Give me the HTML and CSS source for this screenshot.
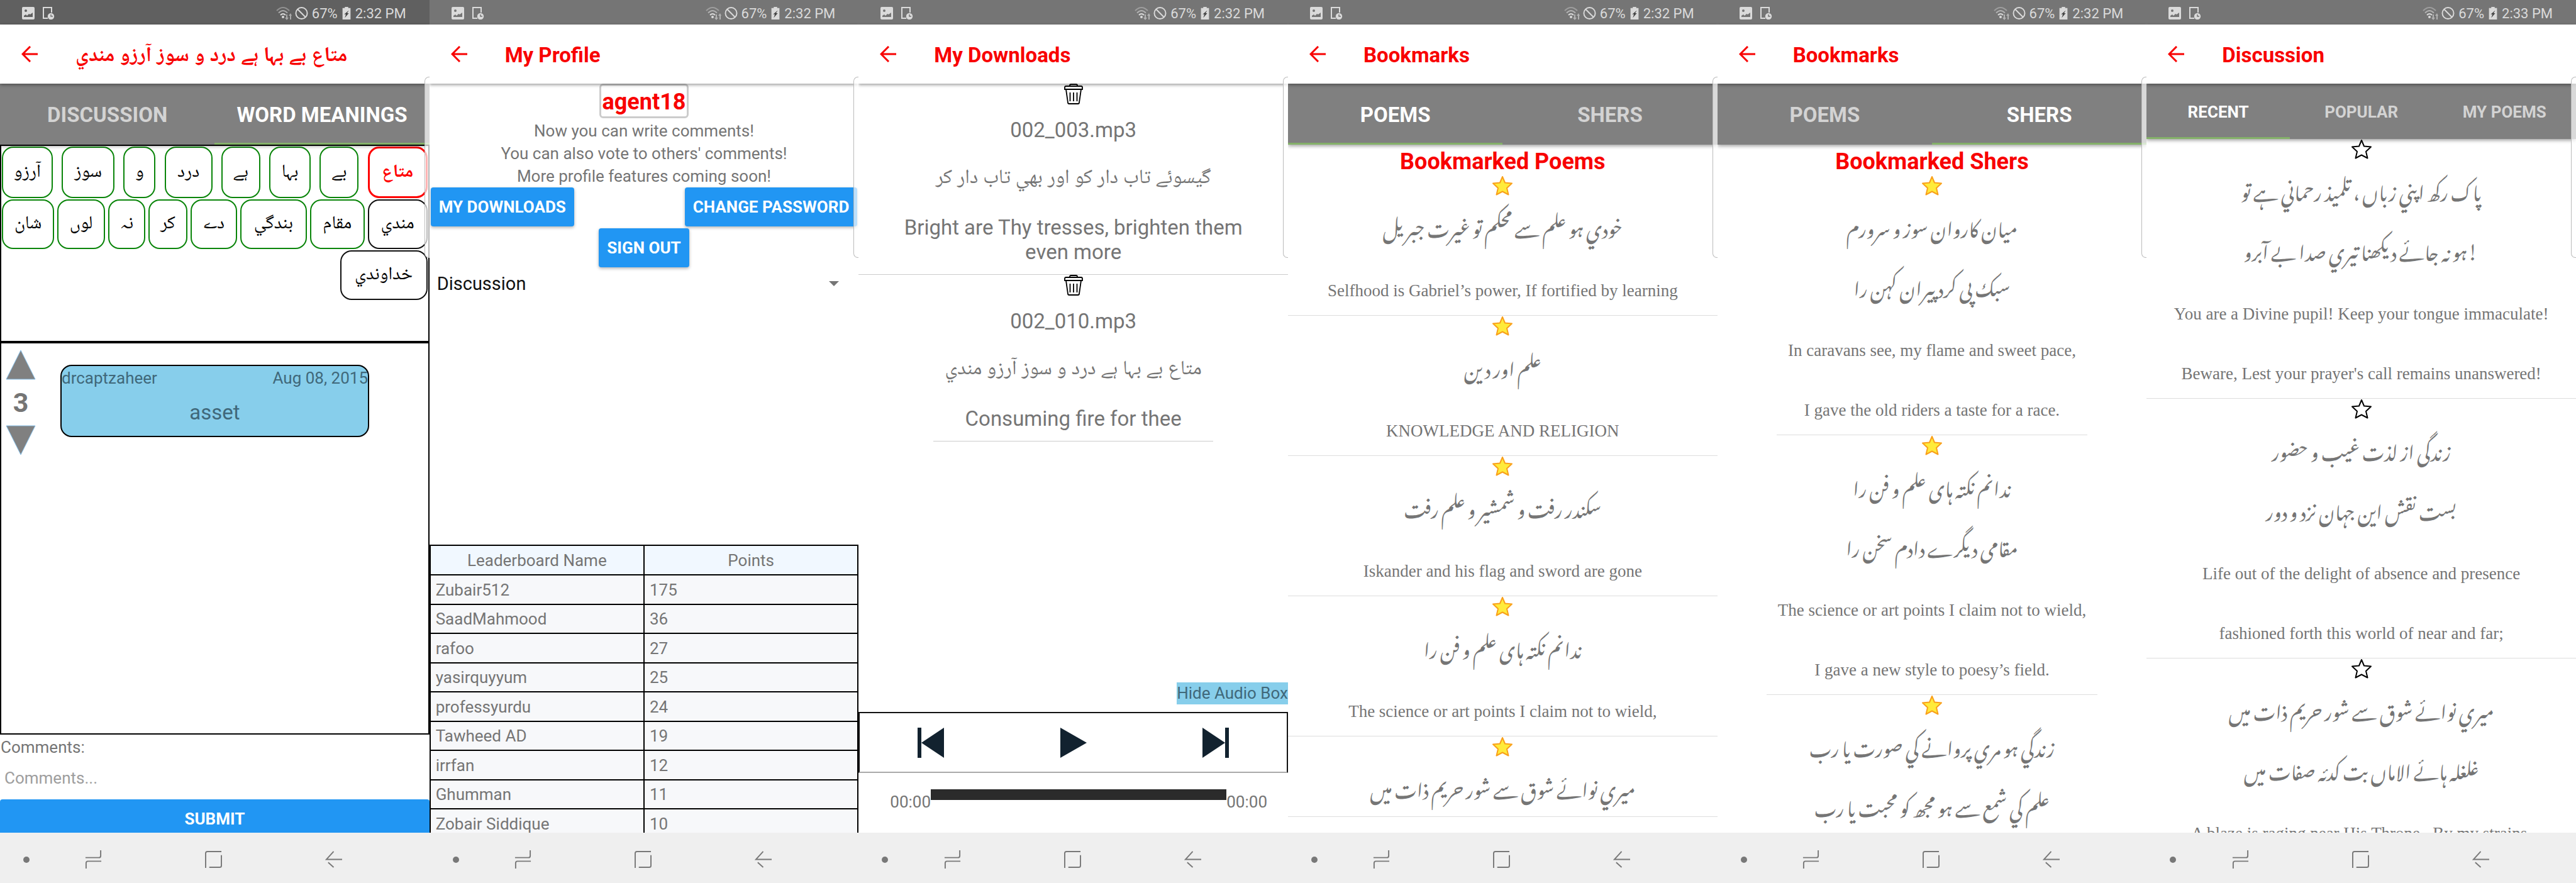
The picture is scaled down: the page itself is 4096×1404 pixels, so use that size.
FILE: index.html
```html
<!DOCTYPE html>
<html lang="en">
<head>
<meta charset="utf-8">
<title>Poetry app screens</title>
<link rel="stylesheet" href="styles.css">
</head>
<body>
<svg class="sprite" aria-hidden="true">
  <symbol id="i-image" viewBox="0 0 20 20"><path fill="currentColor" fill-rule="evenodd" d="M2 0h16a2 2 0 0 1 2 2v16a2 2 0 0 1-2 2H2a2 2 0 0 1-2-2V2a2 2 0 0 1 2-2zM3 16h14V9l-4 3-2-1-3 3-2-2-3 2zM6 4a2 2 0 1 0 0 4 2 2 0 0 0 0-4z"/></symbol>
  <symbol id="i-phone" viewBox="0 0 20 20"><path fill="none" stroke="currentColor" stroke-width="2" d="M9 18H2V1h13v8"/><circle cx="14" cy="15" r="5.200" fill="currentColor"/><path d="M14 12v3h3" fill="none" stroke="#757575" stroke-width="1.500"/></symbol>
  <symbol id="i-wifi" viewBox="0 0 26 22"><g fill="none" stroke="currentColor" stroke-width="2"><path opacity=".4" d="M1 7Q11-3 21 7"/><path opacity=".6" d="M4 10.500Q11 3.500 18 10.500"/><path d="M7 14Q11 10 15 14"/></g><circle cx="11" cy="17" r="2" fill="currentColor"/><path fill="currentColor" opacity=".6" d="M16 13h2v5h2l-3 4-3-4h2zM22 21h2v-6h1l-2-4-3 4h2z"/></symbol>
  <symbol id="i-none" viewBox="0 0 22 22"><g fill="none" stroke="currentColor" stroke-width="2"><circle cx="11" cy="11" r="9.500"/><path d="M4.500 4.500l13 13"/></g></symbol>
  <symbol id="i-battery" viewBox="0 0 14 22"><path fill="currentColor" d="M4 0h6v2h4v20H0V2h4z"/><path fill="#444" d="M11 6L3 13h3l-2 6 7-8H8z"/></symbol>
  <symbol id="i-back" viewBox="0 0 26 26"><path fill="none" stroke="currentColor" stroke-width="3" d="M26 13H2M14 1L2 13l12 12"/></symbol>
  <symbol id="i-recents" viewBox="0 0 26 30"><path fill="none" stroke="currentColor" stroke-width="2" d="M0 12h22q3 0 3-3V0M26 18H4q-3 0-3 3v9"/></symbol>
  <symbol id="i-home" viewBox="0 0 28 28"><path fill="none" stroke="currentColor" stroke-width="2" d="M1 28V4q0-3 3-3h23M27 7v17q0 3-3 3H7"/></symbol>
  <symbol id="i-navback" viewBox="0 0 28 28"><path fill="none" stroke="currentColor" stroke-width="2" d="M28 14H2L14 1M5 19l9 8"/></symbol>
  <symbol id="i-dot" viewBox="0 0 10 10"><circle cx="5" cy="5" r="5" fill="currentColor"/></symbol>
  <symbol id="i-star" viewBox="0 0 34 32"><path stroke-width="2" stroke-linejoin="round" d="M17 2l4 9.500 11 1-8 7.500 2.500 10.500L17 25.500 7.500 30.500 10 20l-8-7.500 11-1z"/></symbol>
  <symbol id="i-trash" viewBox="0 0 30 33"><g fill="none" stroke="#000" stroke-width="1.800"><path d="M9 4V3q0-2 2-2h8q2 0 2 2v1M3 4h24q2 0 2 2v3H1V6q0-2 2-2zM3 9l3 21q0 2 2 2h14q2 0 2-2l3-21M9.500 14v14M15 14v14M20.500 14v14"/></g></symbol>
</svg>

<main class="screens">

<section class="screen screen-dark">
  <div class="status"><svg class="s-img"><use href="#i-image"/></svg><svg class="s-img"><use href="#i-phone"/></svg><span class="status-gap"></span><svg class="s-wifi"><use href="#i-wifi"/></svg><svg class="s-none"><use href="#i-none"/></svg><span>67%</span><svg class="s-bat"><use href="#i-battery"/></svg><span>2:32 PM</span></div>
  <header class="appbar"><button class="back" aria-label="Back"><svg><use href="#i-back"/></svg></button><h1 class="urdu-title" lang="ur">متاع بے بہا ہے درد و سوز آرزو مندي</h1></header>
  <nav class="tabs"><button class="tab">DISCUSSION</button><button class="tab active">WORD MEANINGS</button></nav>
  <div class="body">
    <div class="words" dir="rtl" lang="ur">
      <div class="word-row row-a"><button class="word chosen">متاع</button><button class="word">بے</button><button class="word">بہا</button><button class="word">ہے</button><button class="word">درد</button><button class="word">و</button><button class="word">سوز</button><button class="word">آرزو</button></div>
      <div class="word-row row-b"><button class="word plain">مندي</button><button class="word">مقام</button><button class="word">بندگي</button><button class="word">دے</button><button class="word">کر</button><button class="word">نہ</button><button class="word">لوں</button><button class="word">شان</button></div>
      <div class="word-row row-c"><button class="word plain">خداوندي</button></div>
    </div>
    <div class="meanings">
      <div class="votes"><button class="vote" aria-label="Vote up"><svg viewBox="0 0 48 48"><path d="M24 1L47 47H1z"/></svg></button><strong>3</strong><button class="vote" aria-label="Vote down"><svg viewBox="0 0 48 48"><path d="M24 47L47 1H1z"/></svg></button></div>
      <article class="meaning"><div class="meta"><span>drcaptzaheer</span><span>Aug 08, 2015</span></div><p>asset</p></article>
    </div>
    <form class="comment"><label for="comment">Comments:</label><input id="comment" type="text" placeholder="Comments..."><button class="btn submit" type="button">SUBMIT</button></form>
  </div>
  <nav class="navbar"><svg class="n-dot"><use href="#i-dot"/></svg><button aria-label="Recents"><svg><use href="#i-recents"/></svg></button><button aria-label="Home"><svg><use href="#i-home"/></svg></button><button aria-label="Back"><svg><use href="#i-navback"/></svg></button></nav>
</section>

<section class="screen">
  <div class="status"><svg class="s-img"><use href="#i-image"/></svg><svg class="s-img"><use href="#i-phone"/></svg><span class="status-gap"></span><svg class="s-wifi"><use href="#i-wifi"/></svg><svg class="s-none"><use href="#i-none"/></svg><span>67%</span><svg class="s-bat"><use href="#i-battery"/></svg><span>2:32 PM</span></div>
  <header class="appbar"><button class="back" aria-label="Back"><svg><use href="#i-back"/></svg></button><h1>My Profile</h1></header>
  <div class="body profile">
    <h2 class="user">agent18</h2>
    <div class="intro"><p>Now you can write comments!</p><p>You can also vote to others' comments!</p><p>More profile features coming soon!</p></div>
    <div class="actions"><button class="btn">MY DOWNLOADS</button><button class="btn">CHANGE PASSWORD</button></div>
    <button class="btn signout">SIGN OUT</button>
    <div class="picker"><select aria-label="Leaderboard type"><option>Discussion</option></select><svg viewBox="0 0 16 8"><path d="M0 0h16L8 8z"/></svg></div>
    <div class="board">
      <table>
        <thead><tr><th scope="col">Leaderboard Name</th><th scope="col">Points</th></tr></thead>
        <tbody>
          <tr><td>Zubair512</td><td>175</td></tr>
          <tr><td>SaadMahmood</td><td>36</td></tr>
          <tr><td>rafoo</td><td>27</td></tr>
          <tr><td>yasirquyyum</td><td>25</td></tr>
          <tr><td>professyurdu</td><td>24</td></tr>
          <tr><td>Tawheed AD</td><td>19</td></tr>
          <tr><td>irrfan</td><td>12</td></tr>
          <tr><td>Ghumman</td><td>11</td></tr>
          <tr><td>Zobair Siddique</td><td>10</td></tr>
        </tbody>
      </table>
    </div>
  </div>
  <nav class="navbar"><svg class="n-dot"><use href="#i-dot"/></svg><button aria-label="Recents"><svg><use href="#i-recents"/></svg></button><button aria-label="Home"><svg><use href="#i-home"/></svg></button><button aria-label="Back"><svg><use href="#i-navback"/></svg></button></nav>
</section>

<section class="screen">
  <div class="status"><svg class="s-img"><use href="#i-image"/></svg><svg class="s-img"><use href="#i-phone"/></svg><span class="status-gap"></span><svg class="s-wifi"><use href="#i-wifi"/></svg><svg class="s-none"><use href="#i-none"/></svg><span>67%</span><svg class="s-bat"><use href="#i-battery"/></svg><span>2:32 PM</span></div>
  <header class="appbar"><button class="back" aria-label="Back"><svg><use href="#i-back"/></svg></button><h1>My Downloads</h1></header>
  <div class="body">
    <article class="download wide"><button class="trash" aria-label="Delete"><svg><use href="#i-trash"/></svg></button><p>002_003.mp3</p><p class="ur" lang="ur">گیسوئے تاب دار کو اور بھي تاب دار کر</p><p>Bright are Thy tresses, brighten them even more</p></article>
    <article class="download"><button class="trash" aria-label="Delete"><svg><use href="#i-trash"/></svg></button><p>002_010.mp3</p><p class="ur" lang="ur">متاع بے بہا ہے درد و سوز آرزو مندي</p><p>Consuming fire for thee</p></article>
    <div class="audio">
      <button class="hide">Hide Audio Box</button>
      <div class="player">
        <button aria-label="Previous"><svg viewBox="0 0 42 48"><path d="M0 0h6v48H0zM42 0v48L6 24z"/></svg></button>
        <button aria-label="Play"><svg viewBox="0 0 42 48"><path d="M0 0l42 24L0 48z"/></svg></button>
        <button aria-label="Next"><svg viewBox="0 0 42 48"><path d="M36 0h6v48h-6zM0 0v48l36-24z"/></svg></button>
      </div>
      <div class="progress"><span>00:00</span><div class="track"></div><span>00:00</span></div>
    </div>
  </div>
  <nav class="navbar"><svg class="n-dot"><use href="#i-dot"/></svg><button aria-label="Recents"><svg><use href="#i-recents"/></svg></button><button aria-label="Home"><svg><use href="#i-home"/></svg></button><button aria-label="Back"><svg><use href="#i-navback"/></svg></button></nav>
</section>

<section class="screen">
  <div class="status"><svg class="s-img"><use href="#i-image"/></svg><svg class="s-img"><use href="#i-phone"/></svg><span class="status-gap"></span><svg class="s-wifi"><use href="#i-wifi"/></svg><svg class="s-none"><use href="#i-none"/></svg><span>67%</span><svg class="s-bat"><use href="#i-battery"/></svg><span>2:32 PM</span></div>
  <header class="appbar"><button class="back" aria-label="Back"><svg><use href="#i-back"/></svg></button><h1>Bookmarks</h1></header>
  <nav class="tabs"><button class="tab active">POEMS</button><button class="tab">SHERS</button></nav>
  <div class="body">
    <h2 class="heading">Bookmarked Poems</h2>
    <article class="poem"><button class="star on" aria-label="Bookmark"><svg><use href="#i-star"/></svg></button><p class="nast" lang="ur">خودي ہو علم سے محکم تو غیرت جبریل</p><p>Selfhood is Gabriel’s power, If fortified by learning</p></article>
    <article class="poem"><button class="star on" aria-label="Bookmark"><svg><use href="#i-star"/></svg></button><p class="nast" lang="ur">علم اور دین</p><p>KNOWLEDGE AND RELIGION</p></article>
    <article class="poem"><button class="star on" aria-label="Bookmark"><svg><use href="#i-star"/></svg></button><p class="nast" lang="ur">سکندر رفت و شمشیر و علم رفت</p><p>Iskander and his flag and sword are gone</p></article>
    <article class="poem"><button class="star on" aria-label="Bookmark"><svg><use href="#i-star"/></svg></button><p class="nast" lang="ur">ندانم نکتہ ہای علم و فن را</p><p>The science or art points I claim not to wield,</p></article>
    <article class="poem"><button class="star on" aria-label="Bookmark"><svg><use href="#i-star"/></svg></button><p class="nast" lang="ur">میري نوائے شوق سے شور حریم ذات میں</p></article>
  </div>
  <nav class="navbar"><svg class="n-dot"><use href="#i-dot"/></svg><button aria-label="Recents"><svg><use href="#i-recents"/></svg></button><button aria-label="Home"><svg><use href="#i-home"/></svg></button><button aria-label="Back"><svg><use href="#i-navback"/></svg></button></nav>
</section>

<section class="screen">
  <div class="status"><svg class="s-img"><use href="#i-image"/></svg><svg class="s-img"><use href="#i-phone"/></svg><span class="status-gap"></span><svg class="s-wifi"><use href="#i-wifi"/></svg><svg class="s-none"><use href="#i-none"/></svg><span>67%</span><svg class="s-bat"><use href="#i-battery"/></svg><span>2:32 PM</span></div>
  <header class="appbar"><button class="back" aria-label="Back"><svg><use href="#i-back"/></svg></button><h1>Bookmarks</h1></header>
  <nav class="tabs"><button class="tab">POEMS</button><button class="tab active">SHERS</button></nav>
  <div class="body">
    <h2 class="heading">Bookmarked Shers</h2>
    <article class="poem sher"><button class="star on" aria-label="Bookmark"><svg><use href="#i-star"/></svg></button><p class="nast" lang="fa">میان کاروان سوز و سرورم</p><p class="nast" lang="fa">سبک پی کرد پیران کہن را</p><p>In caravans see, my flame and sweet pace,</p><p>I gave the old riders a taste for a race.</p></article>
    <article class="poem sher"><button class="star on" aria-label="Bookmark"><svg><use href="#i-star"/></svg></button><p class="nast" lang="fa">ندانم نکتہ ہای علم و فن را</p><p class="nast" lang="fa">مقامی دیگرے دادم سخن را</p><p>The science or art points I claim not to wield,</p><p>I gave a new style to poesy’s field.</p></article>
    <article class="poem sher"><button class="star on" aria-label="Bookmark"><svg><use href="#i-star"/></svg></button><p class="nast" lang="ur">زندگي ہو مري پروانے کي صورت یا رب</p><p class="nast" lang="ur">علم کي شمع سے ہو مجھ کو محبت یا رب</p></article>
  </div>
  <nav class="navbar"><svg class="n-dot"><use href="#i-dot"/></svg><button aria-label="Recents"><svg><use href="#i-recents"/></svg></button><button aria-label="Home"><svg><use href="#i-home"/></svg></button><button aria-label="Back"><svg><use href="#i-navback"/></svg></button></nav>
</section>

<section class="screen">
  <div class="status"><svg class="s-img"><use href="#i-image"/></svg><svg class="s-img"><use href="#i-phone"/></svg><span class="status-gap"></span><svg class="s-wifi"><use href="#i-wifi"/></svg><svg class="s-none"><use href="#i-none"/></svg><span>67%</span><svg class="s-bat"><use href="#i-battery"/></svg><span>2:33 PM</span></div>
  <header class="appbar"><button class="back" aria-label="Back"><svg><use href="#i-back"/></svg></button><h1>Discussion</h1></header>
  <nav class="tabs tabs-small"><button class="tab active">RECENT</button><button class="tab">POPULAR</button><button class="tab">MY POEMS</button></nav>
  <div class="body">
    <article class="poem"><button class="star" aria-label="Bookmark"><svg><use href="#i-star"/></svg></button><p class="nast" lang="ur">پاک رکھ اپني زباں ، تلمیذ رحماني ہے تو</p><p class="nast" lang="ur">ہو نہ جائے دیکھنا تیري صدا بے آبرو!</p><p>You are a Divine pupil! Keep your tongue immaculate!</p><p>Beware, Lest your prayer's call remains unanswered!</p></article>
    <article class="poem"><button class="star" aria-label="Bookmark"><svg><use href="#i-star"/></svg></button><p class="nast" lang="fa">زندگی از لذت غیب و حضور</p><p class="nast" lang="fa">بست نقش این جہان نزد و دور</p><p>Life out of the delight of absence and presence</p><p>fashioned forth this world of near and far;</p></article>
    <article class="poem"><button class="star" aria-label="Bookmark"><svg><use href="#i-star"/></svg></button><p class="nast" lang="ur">میري نوائے شوق سے شور حریم ذات میں</p><p class="nast" lang="ur">غلغلہ ہائے الاماں بت کدئہ صفات میں</p><p>A blaze is raging near His Throne,&nbsp; By my strains,</p></article>
  </div>
  <nav class="navbar"><svg class="n-dot"><use href="#i-dot"/></svg><button aria-label="Recents"><svg><use href="#i-recents"/></svg></button><button aria-label="Home"><svg><use href="#i-home"/></svg></button><button aria-label="Back"><svg><use href="#i-navback"/></svg></button></nav>
</section>

</main>
</body>
</html>
```
FILE: styles.css
```css
* { box-sizing: border-box; }
body, h1, h2, p { margin: 0; }
body {
  background: #fff;
  color: #757575;
  font-family: Roboto, "Noto Naskh Arabic", "Noto Sans Arabic", "DejaVu Sans", sans-serif;
  font-size: 26px;
}
button, input, select { margin: 0; padding: 0; border: 0; background: none; color: inherit; font: inherit; }
svg { display: block; }
.sprite { display: none; }

.screens { display: grid; grid-template-columns: repeat(6, minmax(0, 1fr)); }
.screen { position: relative; display: flex; flex-direction: column; height: 100vh; overflow: hidden; }
/* edge panel handle */
.screen::after {
  content: "";
  position: absolute;
  right: 0;
  top: 122px;
  width: 7px;
  height: 286px;
  border: 1px solid #bbb;
  border-right: 0;
  border-radius: 7px 0 0 7px;
  background: rgba(255, 255, 255, .7);
  z-index: 5;
}

/* status bar */
.status {
  flex: none;
  display: flex;
  align-items: center;
  height: 39px;
  padding: 3px 37px 0 35px;
  background: #757575;
  color: #dadada;
  font-size: 22px;
}
.screen-dark .status { background: #606060; }
.s-img { width: 20px; height: 20px; margin-right: 12px; }
.status-gap { flex: 1; }
.s-wifi { width: 26px; height: 22px; margin-right: 4px; }
.s-none { width: 21px; height: 22px; margin-right: 6px; }
.s-bat { width: 14px; height: 20px; margin: 0 7px; }

/* title bar */
.appbar {
  flex: none;
  display: flex;
  align-items: center;
  gap: 60px;
  height: 94px;
  padding-left: 34px;
  background: #fff;
  color: #f80000;
  box-shadow: 0 2px 5px rgba(0, 0, 0, .4);
  z-index: 2;
}
.back svg { width: 26px; height: 26px; }
.appbar h1 { padding-top: 4px; font-size: 33px; line-height: 40px; }
.appbar .urdu-title { padding-top: 0; }

/* tabs */
.tabs {
  flex: none;
  display: flex;
  height: 97px;
  background: #808080;
  box-shadow: 0 2px 6px rgba(0, 0, 0, .4);
  z-index: 1;
}
.tab { flex: 1; padding-top: 4px; border-bottom: 3px solid transparent; color: #d3d3d3; font-size: 33px; font-weight: 700; }
.tab.active { border-color: #84b169; color: #fff; }
.tabs-small { height: 88px; }
.tabs-small .tab { font-size: 26px; }

.body { flex: 1; display: flex; flex-direction: column; min-height: 0; overflow: hidden; }

/* word meanings */
.words { flex: 0 0 314px; border: 2px solid #000; padding: 1px; color: #000; }
.word-row { display: grid; justify-content: space-between; margin-bottom: 2px; }
.row-a { grid-template-columns: 95px 62px 66px 62px 76px 51px 84px 81px; }
.row-b { grid-template-columns: 95px 87px 106px 74px 62px 59px 76px 83px; }
.row-c { grid-template-columns: 139px; }
.word { height: 79px; border: 2px solid #0a850a; border-radius: 18px; white-space: nowrap; font-size: 29px; }
.row-a .word { height: 82px; }
.word.chosen { border: 3px solid #f00; color: #f00; font-weight: 700; }
.word.plain { border-color: #111; }
.meanings { flex: 1; display: flex; align-items: flex-start; gap: 39px; padding: 10px 7px; border: 2px solid #000; }
.votes { display: flex; flex-direction: column; align-items: center; width: 48px; }
.vote svg { width: 48px; height: 48px; fill: #808080; stroke: #86bfe9; }
.votes strong { font-size: 43px; line-height: 72px; }
.meaning { width: 491px; height: 115px; margin-top: 24px; border: 2px solid #000; border-radius: 18px; background: #87ceeb; color: #40687a; }
.meta { display: flex; justify-content: space-between; line-height: 38px; }
.meaning p { font-size: 33px; line-height: 72px; text-align: center; }
.comment { flex: 0 0 156px; min-height: 0; overflow: hidden; display: flex; flex-direction: column; }
.comment label { flex: none; padding: 2px 0 0 1px; line-height: 36px; }
.comment input { flex: none; height: 61px; padding: 0 7px; }
.comment input::placeholder { color: #9e9e9e; opacity: 1; }
.btn { flex: none; height: 62px; padding: 0 13px; border-radius: 4px; background: #2196f3; color: #fff; font-weight: 700; box-shadow: 0 2px 5px rgba(0, 0, 0, .3); }
.submit { margin-top: 4px; box-shadow: none; }

/* profile */
.profile { align-items: center; }
.user { height: 55px; padding: 0 2px; border: 3px solid #ccc; border-radius: 6px; color: #f80000; font-size: 36px; line-height: 52px; }
.intro { padding-top: 2px; text-align: center; line-height: 36px; }
.actions { display: flex; justify-content: space-between; width: 100%; padding: 0 2px; margin-bottom: 3px; }
.picker { position: relative; width: 100%; height: 52px; }
.picker select { appearance: none; width: 100%; height: 52px; padding-left: 12px; color: #111; font-size: 29px; }
.picker svg { position: absolute; right: 31px; top: 22px; width: 16px; height: 8px; fill: #757575; pointer-events: none; }
.board { flex: 0 0 458px; width: 100%; margin-top: auto; overflow: hidden; }
table { width: 100%; border-collapse: collapse; table-layout: fixed; }
th, td { padding: 0 0 0 8px; border: 2px solid #000; background: #f7f8fa; font-weight: 400; text-align: left; }
th { padding: 0; background: #f1f8ff; text-align: center; }
tr { height: 47px; }
tbody tr:nth-child(even) { height: 46px; }

/* downloads */
.download { flex: none; align-self: center; padding-bottom: 16px; border-bottom: 1px solid #ccc; font-size: 33px; line-height: 39px; text-align: center; }
.download p { max-width: 616px; margin: 0 auto; padding: 0 18px; }
.download.wide { align-self: stretch; }
.trash { display: block; margin: 0 auto 21px; }
.trash svg { width: 30px; height: 33px; }
.download .ur { height: 46px; margin: 31px auto 39px; font-size: 32px; line-height: 46px; }
.audio { margin-top: auto; display: flex; flex-direction: column; }
.hide { align-self: flex-end; background: #87ceeb; color: #40687a; line-height: 35px; }
.player { display: flex; justify-content: space-between; align-items: center; height: 97px; margin: 12px 0 26px; padding: 0 92px; border: 2px solid #111; border-bottom: 2px solid #aaa; }
.player svg { width: 42px; height: 48px; fill: #12222f; }
.progress { display: flex; height: 69px; padding: 0 33px 0 50px; }
.progress span { line-height: 40px; }
.track { flex: 1; height: 17px; background: #2b2b2b; }

/* poems */
.heading { flex: none; height: 49px; padding-top: 2px; color: #f80000; font-size: 36px; line-height: 50px; text-align: center; }
.poem { flex: none; border-bottom: 1px solid #ddd; text-align: center; font-family: "Liberation Serif", serif; font-size: 27px; }
.star { display: block; margin: 0 auto; }
.star svg { width: 34px; height: 32px; fill: #fff; stroke: #000; }
.star.on svg { fill: #ffeb3b; stroke: #f9a01b; }
.poem p { height: 95px; padding-top: 18px; line-height: 77px; white-space: nowrap; }
.poem .nast { padding-top: 9px; font-family: "Noto Nastaliq Urdu", "Noto Naskh Arabic", "DejaVu Sans", serif; font-size: 30px; }
.sher { align-self: center; padding: 0 18px; }

/* system navigation */
.navbar { flex: none; display: grid; grid-template-columns: 84fr 130fr 252fr 130fr 87fr; place-items: center; height: 80px; padding-top: 5px; background: #efefef; color: #787878; }
.n-dot { width: 10px; height: 10px; }
.navbar button svg { width: 27px; height: 29px; }
```
